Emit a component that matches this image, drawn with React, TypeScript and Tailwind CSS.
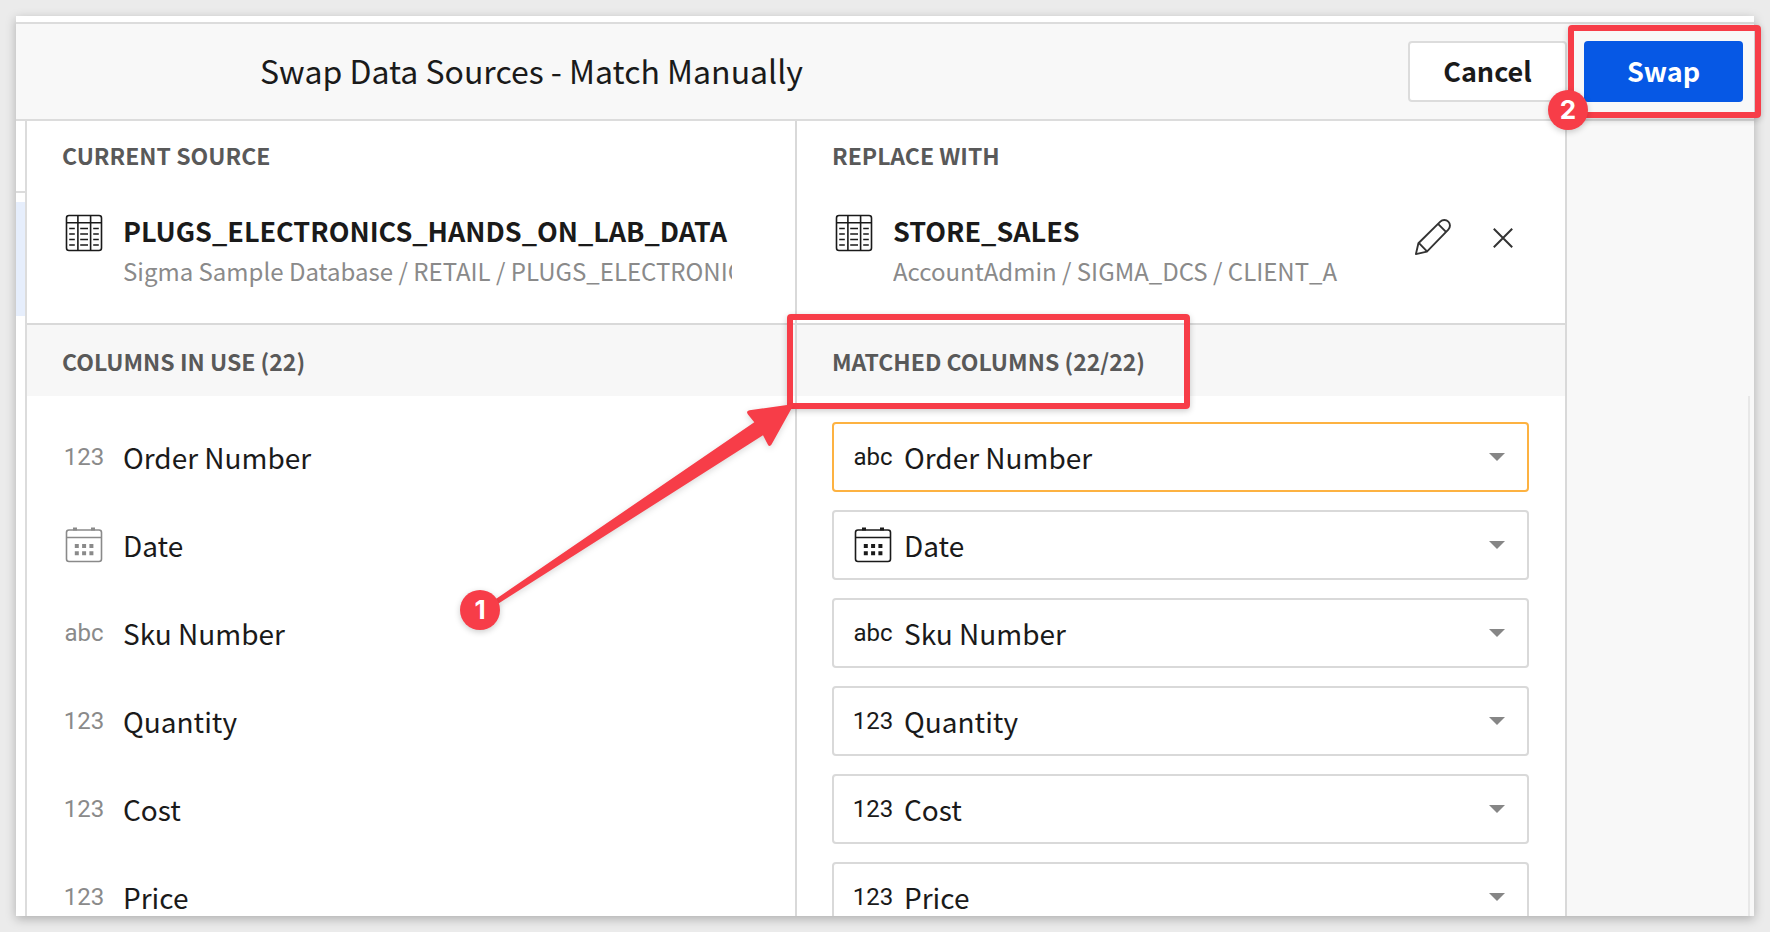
import { useState } from "react";
import type { ReactNode } from "react";

type Kind = "number" | "text" | "date";

const columns: { id: string; name: string; from: Kind; to: Kind }[] = [
  { id: "order-number", name: "Order Number", from: "number", to: "text" },
  { id: "date", name: "Date", from: "date", to: "date" },
  { id: "sku-number", name: "Sku Number", from: "text", to: "text" },
  { id: "quantity", name: "Quantity", from: "number", to: "number" },
  { id: "cost", name: "Cost", from: "number", to: "number" },
  { id: "price", name: "Price", from: "number", to: "number" },
];

function TableIcon() {
  return (
    <svg width="38" height="38" viewBox="0 0 38 38" fill="none" stroke="currentColor" strokeWidth="1.6" className="shrink-0" aria-hidden="true">
      <rect x="1.5" y="1.5" width="35" height="35" rx="2.5" />
      <path d="M1.5 8.8h35M12.9 1.5v35M25.6 1.5v35" />
      <path d="M4.2 14.5h5.6M15.2 14.5h7.8M28.2 14.5h5.6M4.2 20h5.6M15.2 20h7.8M28.2 20h5.6M4.2 25.5h5.6M15.2 25.5h7.8M28.2 25.5h5.6M4.2 31h5.6M15.2 31h7.8M28.2 31h5.6" />
    </svg>
  );
}

function CalendarIcon() {
  return (
    <svg width="38" height="38" viewBox="0 0 38 38" fill="none" stroke="currentColor" strokeWidth="1.6" className="shrink-0" aria-hidden="true">
      <rect x="1.5" y="4" width="35" height="31.5" rx="2.5" />
      <path d="M1.5 11.5h35" />
      <path
        fill="currentColor"
        stroke="none"
        d="M8 1.5h4v3h-4zM26 1.5h4v3h-4zM9.8 18h4v4h-4zM17.1 18h4v4h-4zM24.4 18h4v4h-4zM9.8 25.3h4v4h-4zM17.1 25.3h4v4h-4zM24.4 25.3h4v4h-4z"
      />
    </svg>
  );
}

function PencilIcon() {
  return (
    <svg width="38" height="38" viewBox="0 0 38 38" fill="none" stroke="currentColor" strokeWidth="1.9" strokeLinejoin="round" aria-hidden="true">
      <path d="M1.9 36.1 4.4 25.2 26.3 3.6a5.5 5.5 0 0 1 8 8L12.9 33.6Z" />
      <path d="M24 5.8 32 13.9M5 25.2l8 8.2" />
    </svg>
  );
}

function TypeMark({ kind }: { kind: Kind }) {
  return (
    <span className="flex w-[42px] shrink-0 items-center justify-center">
      {kind === "date" ? (
        <CalendarIcon />
      ) : (
        <span className="font-['Roboto',sans-serif] text-[24px] leading-8">{kind === "number" ? "123" : "abc"}</span>
      )}
    </span>
  );
}

function Badge({ children, className }: { children: ReactNode; className: string }) {
  return (
    <span
      className={`absolute flex h-10 w-10 items-center justify-center rounded-full bg-[#f73d48] font-['Inter',sans-serif] text-[26px] leading-8 font-bold text-white shadow-[0_2px_6px_rgba(0,0,0,0.2)] ${className}`}
    >
      {children}
    </span>
  );
}

function Heading({ children }: { children: ReactNode }) {
  return <h2 className="text-[23px] leading-8 font-bold whitespace-nowrap text-[#595959]">{children}</h2>;
}

function Source({ title, name, path, children }: { title: string; name: string; path: string; children?: ReactNode }) {
  return (
    <section className="h-[204px] shrink-0 border-b-2 border-[#d9d9d9] pt-[18px] pr-[35px] pl-[35px]">
      <Heading>{title}</Heading>
      <div className="mt-10 flex pl-[3px]">
        <span className="mt-[3px]">
          <TableIcon />
        </span>
        <div className="mr-7 ml-5 min-w-0 flex-1 whitespace-nowrap">
          <p className="text-[27px] leading-10 font-bold text-[#1a1a1a]">{name}</p>
          <p className="mt-0.5 overflow-x-clip text-[24px] leading-9 text-[#8a8a8a]">{path}</p>
        </div>
        {children}
      </div>
    </section>
  );
}

function MatchField({ id, name, kind, warn }: { id: string; name: string; kind: Kind; warn: boolean }) {
  const [value, setValue] = useState(name);
  return (
    <div className={`flex h-[70px] items-center gap-2.5 rounded-[4px] border-2 bg-white pr-[22px] pl-[18px] ${warn ? "border-[#fdb241]" : "border-[#d9d9d9]"}`}>
      <TypeMark kind={kind} />
      <select
        id={id}
        value={value}
        onChange={(e) => setValue(e.target.value)}
        className="h-full min-w-0 flex-1 appearance-none bg-transparent text-[28px] leading-10 outline-none"
      >
        {columns.map((c) => (
          <option key={c.id}>{c.name}</option>
        ))}
      </select>
      <svg width="16" height="8" viewBox="0 0 16 8" className="shrink-0" aria-hidden="true">
        <path d="M0 0h16L8 8z" fill="#868686" />
      </svg>
    </div>
  );
}

export default function App() {
  return (
    <div className="flex h-screen bg-[#ebebeb] p-4 font-['Noto_Sans_CJK_SC',sans-serif] text-[#1a1a1a]">
      <main className="flex min-w-0 flex-1 flex-col bg-white pt-1.5 shadow-[0_3px_10px_rgba(0,0,0,0.26)]">
        <header className="relative z-20 flex h-[99px] shrink-0 items-center border-y-2 border-[#dcdcdc] bg-[#f8f8f8] pr-[11px] pl-[244px]">
          <h1 className="flex-1 pb-1 text-[32px] leading-10">Swap Data Sources - Match Manually</h1>
          <button type="button" className="h-[61px] w-[159px] rounded-[4px] border-2 border-[#dcdcdc] bg-white pb-0.5 text-[27px] leading-10 font-bold">
            Cancel
          </button>
          <div className="relative ml-[17px]">
            <button type="button" className="block h-[61px] w-[159px] rounded-[4px] bg-[#0658e5] pb-0.5 text-[27px] leading-10 font-bold text-white">
              Swap
            </button>
            <span className="pointer-events-none absolute -top-4 -right-[18px] -bottom-4 -left-4 rounded-[4px] border-6 border-[#f73d48] shadow-[0_2px_6px_rgba(0,0,0,0.2)]" />
            <Badge className="-bottom-7 -left-9">2</Badge>
          </div>
        </header>

        <div className="flex min-h-0 flex-1 overflow-hidden">
          <div className="w-[11px] shrink-0 border-r-2 border-[#dcdcdc]">
            <div className="h-[72px] border-b-2 border-[#dcdcdc]" />
            <div className="mt-[9px] h-[114px] bg-[#e6eefc]" />
          </div>

          <div className="flex min-w-0 flex-1 flex-col border-r-2 border-[#d9d9d9]">
            <Source
              title="CURRENT SOURCE"
              name="PLUGS_ELECTRONICS_HANDS_ON_LAB_DATA"
              path="Sigma Sample Database / RETAIL / PLUGS_ELECTRONICS"
            />
            <div className="flex h-[71px] shrink-0 items-center bg-[#f7f7f7] px-[35px]">
              <Heading>COLUMNS IN USE (22)</Heading>
            </div>
            <div className="flex flex-col gap-[18px] px-[35px] pt-[26px]">
              {columns.map((c) => (
                <div key={c.id} className="flex h-[70px] shrink-0 items-center gap-[18px] pl-px">
                  <span className="text-[#8a8a8a]">
                    <TypeMark kind={c.from} />
                  </span>
                  <label htmlFor={c.id} className="text-[28px] leading-10">
                    {c.name}
                  </label>
                </div>
              ))}
            </div>
          </div>

          <div className="relative z-10 flex min-w-0 flex-1 flex-col border-r-2 border-[#d9d9d9]">
            <Source title="REPLACE WITH" name="STORE_SALES" path="AccountAdmin / SIGMA_DCS / CLIENT_A">
              <div className="flex items-start gap-[41px] pt-[7px] pr-[17px] text-[#333333]">
                <button type="button" aria-label="Edit source">
                  <PencilIcon />
                </button>
                <button type="button" aria-label="Remove source" className="mt-2.5">
                  <svg width="20" height="20" viewBox="0 0 20 20" fill="none" stroke="currentColor" strokeWidth="2" aria-hidden="true">
                    <path d="M.8.8l18.4 18.4M19.2.8.8 19.2" />
                  </svg>
                </button>
              </div>
            </Source>
            <div className="relative flex h-[71px] shrink-0 items-center bg-[#f7f7f7] px-[35px]">
              <Heading>MATCHED COLUMNS (22/22)</Heading>
              <span className="pointer-events-none absolute -top-[11px] -left-2.5 h-[95px] w-[403px] rounded-[4px] border-6 border-[#f73d48] shadow-[0_2px_6px_rgba(0,0,0,0.2)]" />
              <svg
                width="337"
                height="245"
                viewBox="460 390 337 245"
                className="pointer-events-none absolute top-[65px] -left-[337px] drop-shadow-[0_2px_3px_rgba(0,0,0,0.15)]"
                aria-hidden="true"
              >
                <path
                  d="M490 603 754.3 422.3 748 414.5Q745.5 411 749.5 410.3L794 404 771.5 444.6Q769.5 447.5 767.8 444.4L763 435.3 493 607Z"
                  fill="#f73d48"
                />
              </svg>
              <Badge className="top-[265px] -left-[337px]">1</Badge>
            </div>
            <div className="flex flex-col gap-[18px] pt-[26px] pr-9 pl-[35px]">
              {columns.map((c) => (
                <MatchField key={c.id} id={c.id} name={c.name} kind={c.to} warn={c.from !== c.to} />
              ))}
            </div>
          </div>

          <div className="flex w-[187px] shrink-0 flex-col bg-[#f8f8f8] pt-[275px]">
            <div className="mr-1 flex-1 border-r-2 border-[#e8e8e8]" />
          </div>
        </div>
      </main>
    </div>
  );
}
